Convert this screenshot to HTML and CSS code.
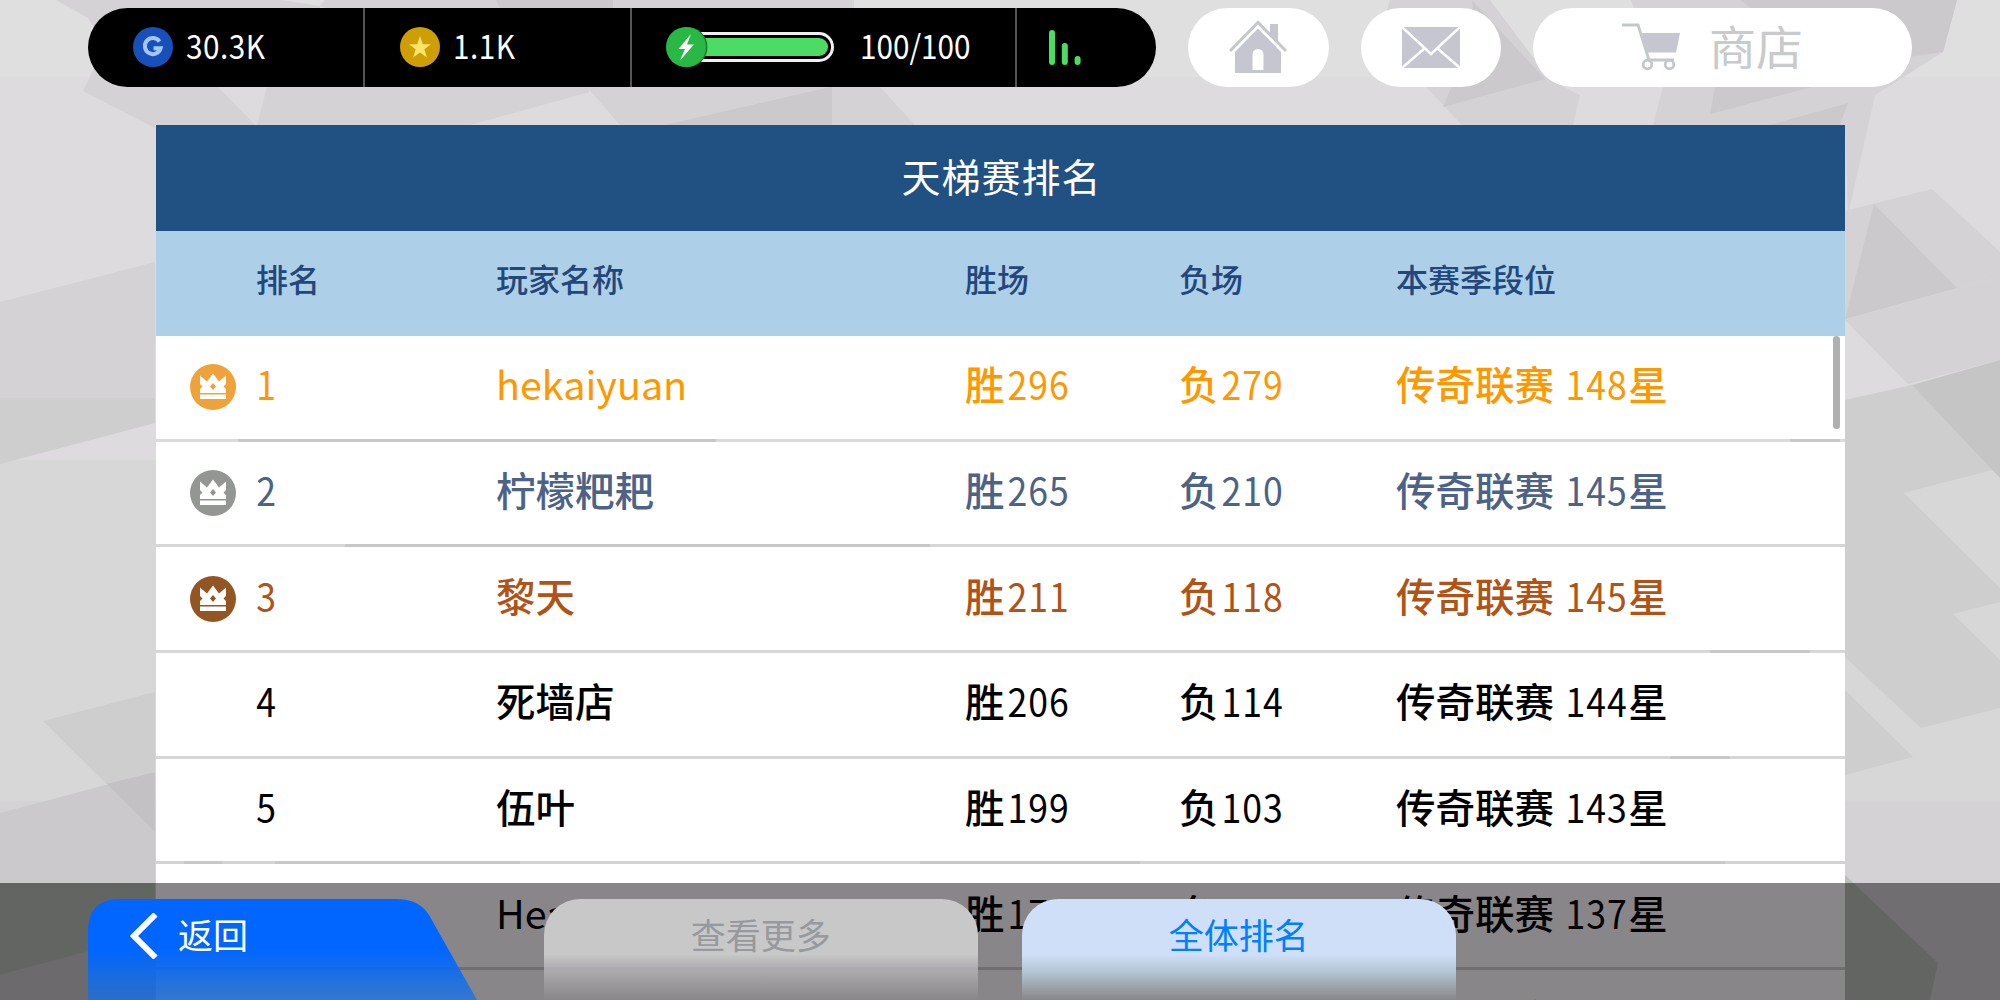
FILE: index.html
```html
<!DOCTYPE html>
<html lang="zh-CN">
<head>
    <meta charset="UTF-8">
    <title>天梯赛排名</title>
    <link rel="stylesheet" href="styles.css">
</head>
<body>
    <!-- Faceted background -->
    <svg class="backdrop" viewBox="0 0 2000 1000" preserveAspectRatio="none">
        <rect width="2000" height="1000" fill="#dddbde"/>
        <rect width="2000" height="77" fill="#dfdfdf"/>
        <rect y="460" width="2000" height="341" fill="#d7d7d7"/>
        <rect y="801" width="2000" height="199" fill="#d4d2d5"/>
        <g fill="#d4d2d5">
            <path d="M56 0H282L320 6V87H218L255 125H155V128L83 91L105 45L88 18Z"/>
            <path d="M267 87H587L590 92L470 125H257Z"/>
            <path d="M325 0H854V87H880L915 125H620L587 87L320 6Z"/>
            <path d="M1390 0H1490L1550 80L1580 95L1573 125H1462L1426 87L1384 20Z"/>
            <path d="M1631 0H1957L1943 52L1902 78L1875 95L1848 215L1845 125H1653L1663 87Z"/>
            <path d="M0 302L155 262V398H0Z"/>
            <path d="M1845 211L1932 189L2000 252V277L1958 288L1845 320Z"/>
            <path d="M1845 320L1958 288L2000 277V360L1908 384Z"/>
        </g>
        <g fill="#cbc9cc">
            <path d="M496 0H613V8H500Z"/>
            <path d="M665 125L830 87H832V125Z"/>
            <path d="M1472 0L1545 79L1443 107L1475 30Z"/>
            <path d="M1740 0H1957L1943 52L1902 58L1780 30Z"/>
            <path d="M1715 87H1812L1710 114Z"/>
            <path d="M1848 103L1840 125H1770Z"/>
            <path d="M1874 204L1957 288L1845 319Z"/>
            <path d="M0 813L155 772V1000H0Z"/>
        </g>
        <g fill="#cecece">
            <path d="M0 398H155V423L0 464Z"/>
            <path d="M43 721L155 692V832Z"/>
            <path d="M1845 400L1912 385L1994 470L1904 493L1845 508Z"/>
            <path d="M1845 433L2000 588V602L1953 614L2000 660V708L1921 728L1845 657Z"/>
            <path d="M1845 690L1913 757L1845 775Z"/>
        </g>
        <path fill="#d7d7d7" d="M1904 493L2000 468V588Z"/>
        <path fill="#c5c5c6" d="M1912 385L2000 360V478Z"/>
        <path fill="#c3c1c4" d="M107 784L155 772V832Z"/>
        <!-- greener facets under the footer -->
        <path fill="#b9c0b9" d="M0 883H155V933L0 975Z"/>
        <path fill="#b9c0b9" d="M1845 875L1938 963L1930 1000H1845Z"/>
        <!-- facets that shine through the row gaps -->
        <path fill="#c8c8c9" d="M238 430H716V450H238ZM345 536H930V556H345ZM1790 430H1840V450H1790ZM1710 640H1810V660H1710ZM1670 750H1730V770H1670ZM184 858H222V868H184ZM275 858H520V868H275ZM920 858H1140V868H920ZM1640 858H1725V868H1640Z"/>
    </svg>

    <div class="topbar">
        <div class="status">
            <div class="stat stat-cash">
                <svg class="coin" viewBox="0 0 40 40">
                    <circle cx="20" cy="20" r="20" fill="#1650b8"/>
                    <path d="M26.5 14.6A8 8 0 1 0 27.6 21.2H20.5" fill="none" stroke="#a3c6ff" stroke-width="4"/>
                </svg>
                <span>30.3K</span>
            </div>
            <div class="stat stat-gold">
                <svg class="coin" viewBox="0 0 40 40">
                    <circle cx="20" cy="20" r="20" fill="#cd9f04"/>
                    <path d="M20 9L22.8 17.2H31L24.4 22.2L26.9 30.6L20 25.6L13.1 30.6L15.6 22.2L9 17.2H17.2Z" fill="#ffe36b"/>
                </svg>
                <span>1.1K</span>
            </div>
            <div class="stat stat-energy">
                <svg class="energy" viewBox="0 0 168 40">
                    <rect x="10" y="6.5" width="156.500" height="27" rx="13.500" fill="#000" stroke="#f3eef3" stroke-width="3"/>
                    <rect x="14" y="11" width="148" height="18" rx="9" fill="#4cdc64"/>
                    <circle cx="21.500" cy="20" r="20" fill="#1c7a2c"/>
                    <circle cx="20" cy="20" r="20" fill="#29b745"/>
                    <path d="M25 7L12.500 22H19L14 33.500L28 17.500H21Z" fill="#fff"/>
                </svg>
                <span>100/100</span>
            </div>
            <div class="stat stat-signal">
                <svg class="signal" viewBox="0 0 32 35">
                    <path d="M3 3V32M15.800 16V32M28.600 29V32" stroke="#4cdc64" stroke-width="6" stroke-linecap="round"/>
                </svg>
            </div>
        </div>

        <a class="pill pill-home">
            <svg width="58" height="54" viewBox="0 0 58 54" fill="#c5c6d0">
                <path d="M41 17V4H49V26Z"/>
                <path d="M6 30L29 7L52 30V53H6Z"/>
                <path d="M23.500 50V35Q23.500 29 29 29Q34.500 29 34.500 35V50Z" fill="#fff"/>
                <path d="M1 33.500L29 5L57 33.500" fill="none" stroke="#fff" stroke-width="5"/>
                <path d="M1 31L29 2.500L57 31" fill="none" stroke="#c5c8ca" stroke-width="3"/>
            </svg>
        </a>
        <a class="pill pill-mail">
            <svg width="58" height="41" viewBox="0 0 58 41">
                <rect width="58" height="41" fill="#c5c6d0"/>
                <path d="M0 0L29 27L58 0M0 41L23 21M58 41L35 21" fill="none" stroke="#fff" stroke-width="2.500"/>
            </svg>
        </a>
        <a class="pill pill-shop">
            <svg width="60" height="48" viewBox="0 0 60 48" fill="none" stroke="#c5c8ca" stroke-width="2.800">
                <path d="M20 10H58L54 29.500H25Z" fill="#c5c6d0" stroke="none"/>
                <path d="M0 2H16L27 37H52"/>
                <circle cx="25.500" cy="41.500" r="4.300"/>
                <circle cx="47.500" cy="41.500" r="4.300"/>
            </svg>
            <span>商店</span>
        </a>
    </div>

    <div class="board">
        <h1>天梯赛排名</h1>
        <div class="row head">
            <span></span>
            <span>排名</span>
            <span>玩家名称</span>
            <span>胜场</span>
            <span>负场</span>
            <span>本赛季段位</span>
        </div>
        <div class="list">
            <div class="row gold">
                <svg class="medal" viewBox="0 0 46 46"><use href="#crown"/></svg>
                <span><b>1</b></span>
                <span class="latin">hekaiyuan</span>
                <span>胜<b>296</b></span>
                <span>负<b>279</b></span>
                <span>传奇联赛 <b>148</b>星</span>
            </div>
            <div class="row silver">
                <svg class="medal" viewBox="0 0 46 46"><use href="#crown"/></svg>
                <span><b>2</b></span>
                <span>柠檬粑耙</span>
                <span>胜<b>265</b></span>
                <span>负<b>210</b></span>
                <span>传奇联赛 <b>145</b>星</span>
            </div>
            <div class="row bronze">
                <svg class="medal" viewBox="0 0 46 46"><use href="#crown"/></svg>
                <span><b>3</b></span>
                <span>黎天</span>
                <span>胜<b>211</b></span>
                <span>负<b>118</b></span>
                <span>传奇联赛 <b>145</b>星</span>
            </div>
            <div class="row">
                <i></i>
                <span><b>4</b></span>
                <span>死墙店</span>
                <span>胜<b>206</b></span>
                <span>负<b>114</b></span>
                <span>传奇联赛 <b>144</b>星</span>
            </div>
            <div class="row">
                <i></i>
                <span><b>5</b></span>
                <span>伍叶</span>
                <span>胜<b>199</b></span>
                <span>负<b>103</b></span>
                <span>传奇联赛 <b>143</b>星</span>
            </div>
            <div class="row">
                <i></i>
                <span><b>6</b></span>
                <span class="latin">Hearitoni</span>
                <span>胜<b>174</b></span>
                <span>负<b>79</b></span>
                <span>传奇联赛 <b>137</b>星</span>
            </div>
            <div class="row">
                <i></i>
                <span><b>7</b></span>
                <span>黎蒙蒙</span>
                <span>胜<b>170</b></span>
                <span>负<b>98</b></span>
                <span>传奇联赛 <b>136</b>星</span>
            </div>
            <div class="scrollbar"></div>
        </div>
    </div>

    <div class="footer">
        <a class="back">
            <svg class="back-shape" viewBox="0 0 389 101">
                <defs>
                    <linearGradient id="backFade" x1="0" y1="0" x2="0" y2="1">
                        <stop offset=".5" stop-color="#0066ff"/>
                        <stop offset="1" stop-color="#0d70ee" stop-opacity=".68"/>
                    </linearGradient>
                </defs>
                <path d="M0 101V32Q0 0 32 0H308Q331 0 341 16L389 101Z" fill="url(#backFade)"/>
            </svg>
            <svg class="chevron" viewBox="0 0 28 46"><path d="M25.500 1.500L4 23L25.500 44.500" fill="none" stroke="#fff" stroke-width="6"/></svg>
            <span>返回</span>
        </a>
        <a class="tab">查看更多</a>
        <a class="tab active">全体排名</a>
    </div>

    <svg width="0" height="0" class="defs">
        <symbol id="crown" viewBox="0 0 46 46">
            <circle cx="23" cy="23" r="23" fill="currentColor"/>
            <path d="M10 29V11.500L17 17.500L23 9.500L29 17.500L36 11.500V29ZM10 30.500H36V35H10Z" fill="#fff"/>
            <path d="M23 19L26 22.500L23 26L20 22.500ZM10 20L12.500 22.500L10 25ZM36 20L33.500 22.500L36 25Z" fill="currentColor"/>
        </symbol>
    </svg>
</body>
</html>
```

FILE: styles.css
```css
* {
    box-sizing: border-box;
}
body {
    position: relative;
    width: 2000px;
    height: 1000px;
    margin: 0;
    overflow: hidden;
    font-family: "Noto Sans CJK SC", sans-serif;
    background: #dddbde;
}
/* narrow digits */
b {
    display: inline-block;
    margin: 0 -3px 0 -1px;
    font-weight: 400;
    letter-spacing: 1.2px;
    transform: scaleX(.9);
}
.backdrop {
    position: absolute;
    top: 0;
    left: 0;
    width: 2000px;
    height: 1000px;
}
.defs {
    position: absolute;
}

/* Top bar */
.topbar {
    position: relative;
    display: flex;
    padding: 7.5px 88px 0;
    height: 125px;
    align-items: flex-start;
}
.status {
    display: flex;
    width: 1068.5px;
    height: 79.5px;
    margin-right: 32px;
    border-radius: 40px;
    background: #000;
    color: #fff;
    overflow: hidden;
}
.stat {
    display: flex;
    align-items: center;
    font-size: 33px;
    font-weight: 400;
    line-height: 40px;
    border-left: 2px solid #555;
}
.stat span {
    padding-bottom: 5px;
    letter-spacing: .6px;
    transform: scaleX(.9);
    transform-origin: left;
}
.stat-cash {
    width: 275px;
    padding-left: 45px;
    border-left: none;
}
.stat-gold {
    width: 267px;
    padding-left: 35px;
}
.stat-energy {
    width: 385px;
    padding-left: 34px;
}
.stat-energy span {
    letter-spacing: 0;
}
.stat-signal {
    flex: 1;
    padding-left: 32px;
}
.coin {
    width: 40px;
    height: 40px;
    margin-right: 13px;
}
.energy {
    width: 168px;
    height: 40px;
    margin-right: 26px;
}
.signal {
    width: 32px;
    height: 35px;
}
.pill {
    display: flex;
    align-items: center;
    justify-content: center;
    width: 140.5px;
    height: 79.5px;
    margin-right: 32px;
    border-radius: 40px;
    background: #fff;
    color: #c8cacc;
    font-size: 47px;
    font-weight: 400;
    line-height: 60px;
}
.pill-shop {
    width: 379px;
    margin-right: 0;
    padding-right: 20px;
}
.pill-shop span {
    margin-left: 27px;
    padding-bottom: 5px;
}

/* Leaderboard */
.board {
    position: relative;
    width: 1689px;
    height: 875px;
    margin-left: 155.5px;
    overflow: hidden;
}
h1 {
    height: 105.5px;
    margin: 0;
    padding-left: 3px;
    background: #215083;
    color: #fff;
    font-size: 39px;
    font-weight: 400;
    letter-spacing: 1px;
    line-height: 101px;
    text-align: center;
}
.row {
    display: grid;
    grid-template-columns: 100.5px 240px 469px 214px 217px 1fr;
    align-items: center;
    height: 102.7px;
    padding-bottom: 8px;
    background: #fff;
    color: #000;
    font-size: 39.5px;
    font-weight: 500;
    line-height: 60px;
    white-space: pre;
}
.row.head {
    height: 105.5px;
    padding: 0;
    background: #adcfe8;
    color: #23477b;
    font-size: 32px;
    line-height: 94px;
    align-items: start;
}
.list {
    position: relative;
    display: grid;
    gap: 3px;
}
.latin {
    font-weight: 400;
}
.medal {
    width: 46px;
    height: 46px;
    margin: 8px 0 0 34.5px;
}
.row.gold {
    color: #ff9800;
}
.gold .medal {
    color: #f0a23a;
}
.row.silver {
    color: #4c6286;
}
.silver .medal {
    color: #949693;
}
.row.bronze {
    color: #b15316;
}
.bronze .medal {
    color: #935522;
}
.scrollbar {
    position: absolute;
    top: 0;
    right: 5px;
    width: 7px;
    height: 93px;
    border-radius: 4px;
    background: #b0b0b0;
}

/* Footer */
.footer {
    position: absolute;
    left: 0;
    bottom: 0;
    display: flex;
    width: 2000px;
    height: 117px;
    padding: 16px 0 0 88px;
    background: rgba(6, 2, 6, .48);
    font-size: 35px;
    line-height: 70px;
}
.back {
    position: relative;
    display: flex;
    width: 389px;
    margin-right: 66.5px;
    padding-left: 42px;
    color: #fff;
}
.back-shape {
    position: absolute;
    top: 0;
    left: 0;
    width: 389px;
    height: 101px;
}
.chevron {
    position: relative;
    width: 28px;
    height: 46px;
    margin: 14px 20px 0 0;
}
.back span {
    position: relative;
}
.tab {
    width: 434.5px;
    margin-right: 43.5px;
    border-radius: 36px 36px 0 0;
    background: linear-gradient(#c8c8c8 55%, #b4b2b6 65%, rgba(133, 133, 133, 0) 100%);
    color: #97999e;
    text-align: center;
}
.tab.active {
    background: linear-gradient(#cfdff8 55%, #b4c5d4 72%, rgba(133, 133, 133, 0) 100%);
    color: #0080ff;
}
```
